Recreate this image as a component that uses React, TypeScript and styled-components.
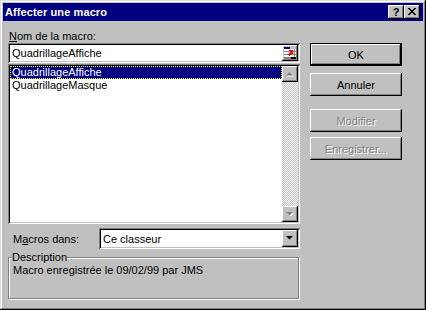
import styled, { createGlobalStyle, css } from 'styled-components';

const GlobalStyle = createGlobalStyle`
  html, body {
    margin: 0;
    padding: 0;
    background: #c0c0c0;
  }
  body {
    font-family: "Liberation Sans", Arial, sans-serif;
    font-size: 11px;
    color: #000;
  }
`;

const raised = css`
  box-shadow: inset -1px -1px #000, inset 1px 1px #fff, inset -2px -2px #808080;
`;

const sunken = css`
  box-shadow: inset 1px 1px #808080, inset -1px -1px #fff, inset 2px 2px #000,
    inset -2px -2px #c0c0c0;
`;

const StWindow = styled.div`
  width: 426px;
  height: 310px;
  box-sizing: border-box;
  padding: 3px;
  background: #c0c0c0;
  box-shadow: inset -1px -1px #000, inset 1px 1px #dfdfdf, inset -2px -2px #808080,
    inset 2px 2px #fff;
  display: flex;
  flex-direction: column;
`;

const StTitleBar = styled.div`
  height: 18px;
  background: #000080;
  display: flex;
  align-items: center;
  padding: 0 3px 0 2px;
  gap: 0;
`;

const StTitle = styled.span`
  flex: 1;
  color: #fff;
  font-weight: bold;
  font-size: 11px;
  letter-spacing: 0.1px;
`;

const StTitleButton = styled.div<{ $gap?: number }>`
  width: 16px;
  height: 14px;
  box-sizing: border-box;
  background: #c0c0c0;
  ${raised};
  display: flex;
  align-items: center;
  justify-content: center;
  margin-left: ${(p) => p.$gap ?? 0}px;
  font-weight: bold;
  font-size: 11px;
  line-height: 14px;
  padding-bottom: 1px;
`;

const StBody = styled.div`
  display: flex;
  gap: 10px;
  padding: 9px 0 0 5px;
`;

const StLeft = styled.div`
  width: 292px;
  display: flex;
  flex-direction: column;
`;

const StLabel = styled.div`
  height: 13px;
  line-height: 13px;
  padding-left: 1px;
`;

const StInput = styled.div`
  height: 20px;
  box-sizing: border-box;
  background: #fff;
  ${sunken};
  display: flex;
  align-items: center;
  padding: 0 2px 0 4px;
`;

const StInputText = styled.span`
  flex: 1;
`;

const StIconButton = styled.div`
  width: 16px;
  height: 16px;
  box-sizing: border-box;
  background: #c0c0c0;
  ${raised};
  display: flex;
  align-items: center;
  justify-content: center;
`;

const StList = styled.div`
  margin-top: 1px;
  height: 160px;
  box-sizing: border-box;
  background: #fff;
  ${sunken};
  padding: 2px;
  display: flex;
`;

const StItems = styled.div`
  flex: 1;
  display: flex;
  flex-direction: column;
`;

const StItem = styled.div<{ $selected?: boolean }>`
  height: 13px;
  line-height: 13px;
  padding-left: 2px;
  box-sizing: border-box;
  ${(p) =>
    p.$selected &&
    css`
      background: #000080;
      color: #fff;
      outline: 1px dotted #ffff00;
      outline-offset: -1px;
      line-height: 12px;
    `}
`;

const StScrollbar = styled.div`
  width: 16px;
  display: flex;
  flex-direction: column;
`;

const StTrack = styled.div`
  flex: 1;
  background-color: #fff;
  background-image: conic-gradient(#c0c0c0 25%, #fff 0 50%, #c0c0c0 0 75%, #fff 0);
  background-size: 2px 2px;
`;

const StArrowButton = styled.div`
  width: 16px;
  height: 16px;
  box-sizing: border-box;
  background: #c0c0c0;
  ${raised};
  display: flex;
  align-items: center;
  justify-content: center;
`;

const StComboRow = styled.div`
  margin-top: 4px;
  height: 21px;
  display: flex;
  align-items: center;
`;

const StComboLabel = styled.div`
  width: 91px;
  padding-left: 5px;
  box-sizing: border-box;
`;

const StCombo = styled.div`
  flex: 1;
  height: 21px;
  box-sizing: border-box;
  background: #fff;
  ${sunken};
  display: flex;
  align-items: center;
  padding: 2px;
`;

const StComboText = styled.span`
  flex: 1;
  padding-left: 2px;
`;

const StComboButton = styled(StArrowButton)`
  height: 17px;
`;

const StGroup = styled.fieldset`
  margin: 2px 1px 0 0;
  padding: 0 4px;
  height: 48px;
  box-sizing: border-box;
  border: 1px solid #808080;
  box-shadow: 1px 1px 0 #fff, inset 1px 1px 0 #fff;
`;

const StLegend = styled.legend`
  padding: 0;
  margin-left: -1px;
  background: #c0c0c0;
  line-height: 13px;
`;

const StGroupText = styled.div`
  line-height: 13px;
  margin-top: 0;
`;

const StRight = styled.div`
  width: 92px;
  display: flex;
  flex-direction: column;
  padding-top: 13px;
`;

const StButton = styled.div<{ $default?: boolean; $disabled?: boolean; $gap: number }>`
  height: 23px;
  box-sizing: border-box;
  margin-top: ${(p) => p.$gap}px;
  background: #c0c0c0;
  display: flex;
  align-items: center;
  justify-content: center;
  ${(p) =>
    p.$default
      ? css`
          box-shadow: inset 0 0 0 1px #000, inset -2px -2px #000, inset 2px 2px #fff,
            inset -3px -3px #808080;
        `
      : raised};
  ${(p) =>
    p.$disabled &&
    css`
      color: #808080;
      text-shadow: 1px 1px 0 #fff;
    `}
`;

const Under = styled.span`
  text-decoration: underline;
`;

function MacroIcon() {
  return (
    <svg width="12" height="12" viewBox="0 0 12 12" shapeRendering="crispEdges">
      <rect x="0" y="0" width="12" height="12" fill="#fff" />
      <rect x="0" y="0" width="6" height="2" fill="#000080" />
      <rect x="6" y="0" width="6" height="2" fill="#c0c0c0" />
      <rect x="0" y="4" width="12" height="1" fill="#808080" />
      <rect x="0" y="7" width="12" height="1" fill="#808080" />
      <rect x="0" y="10" width="12" height="1" fill="#808080" />
      <rect x="10" y="2" width="1" height="10" fill="#808080" />
      <rect x="0" y="11" width="12" height="1" fill="#808080" />
      <rect x="7" y="10" width="5" height="2" fill="#000" />
      <polygon points="4,3 9,3 9,8 7.5,6.5 5,9 3.5,7.5 6,5 4,3" fill="#ff0000" />
    </svg>
  );
}

function Triangle({ down, disabled }: { down?: boolean; disabled?: boolean }) {
  const pts = down ? '0,0 7,0 3.5,3.5' : '3.5,0 7,3.5 0,3.5';
  return (
    <svg width="8" height="5" viewBox="0 0 8 5">
      {disabled && (
        <polygon
          points={down ? '1,1 8,1 4.5,4.5' : '4.5,1 8,4.5 1,4.5'}
          fill="#fff"
        />
      )}
      <polygon points={pts} fill={disabled ? '#808080' : '#000'} />
    </svg>
  );
}

export default function App() {
  return (
    <>
      <GlobalStyle />
      <StWindow>
        <StTitleBar>
          <StTitle>Affecter une macro</StTitle>
          <StTitleButton>?</StTitleButton>
          <StTitleButton $gap={0}>
            <svg width="8" height="7" viewBox="0 0 8 7" shapeRendering="crispEdges">
              <path d="M0 0h2v1h-2zM6 0h2v1h-2zM1 1h2v1h-2zM5 1h2v1h-2zM2 2h4v1h-4zM3 3h2v1h-2zM2 4h4v1h-4zM1 5h2v1h-2zM5 5h2v1h-2zM0 6h2v1h-2zM6 6h2v1h-2z" fill="#000" />
            </svg>
          </StTitleButton>
        </StTitleBar>
        <StBody>
          <StLeft>
            <StLabel>
              <Under>N</Under>om de la macro:
            </StLabel>
            <StInput>
              <StInputText>QuadrillageAffiche</StInputText>
              <StIconButton>
                <MacroIcon />
              </StIconButton>
            </StInput>
            <StList>
              <StItems>
                <StItem $selected>QuadrillageAffiche</StItem>
                <StItem>QuadrillageMasque</StItem>
              </StItems>
              <StScrollbar>
                <StArrowButton>
                  <Triangle disabled />
                </StArrowButton>
                <StTrack />
                <StArrowButton>
                  <Triangle down disabled />
                </StArrowButton>
              </StScrollbar>
            </StList>
            <StComboRow>
              <StComboLabel>
                M<Under>a</Under>cros dans:
              </StComboLabel>
              <StCombo>
                <StComboText>Ce classeur</StComboText>
                <StComboButton>
                  <Triangle down />
                </StComboButton>
              </StCombo>
            </StComboRow>
            <StGroup>
              <StLegend>Description</StLegend>
              <StGroupText>Macro enregistrée le 09/02/99 par JMS</StGroupText>
            </StGroup>
          </StLeft>
          <StRight>
            <StButton $default $gap={0}>OK</StButton>
            <StButton $gap={7}>Annuler</StButton>
            <StButton $disabled $gap={13}>Modifier</StButton>
            <StButton $disabled $gap={5}>Enregistrer...</StButton>
          </StRight>
        </StBody>
      </StWindow>
    </>
  );
}
